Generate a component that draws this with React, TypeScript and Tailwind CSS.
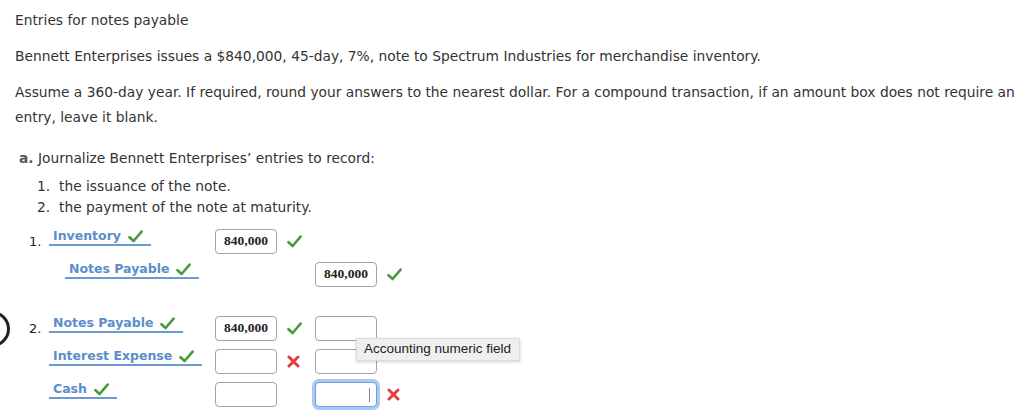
import React from "react";

const Check = () => (
	<svg width="15" height="13" viewBox="0 0 15 13" className="inline-block">
		<path
			d="M1.5 7.2 L5.6 11 L13.6 1.6"
			fill="none"
			stroke="#4a9a3c"
			strokeWidth="2.6"
			strokeLinecap="round"
			strokeLinejoin="round"
		/>
	</svg>
);

const Cross = () => (
	<svg width="13" height="13" viewBox="0 0 13 13" className="inline-block">
		<path
			d="M2 2 L11 11 M11 2 L2 11"
			fill="none"
			stroke="#e0413f"
			strokeWidth="3"
			strokeLinecap="round"
		/>
	</svg>
);

const Amount = ({ value, focused }: { value?: string; focused?: boolean }) => (
	<div
		className={
			focused
				? "relative w-[62px] h-[25px] rounded-[4px] border border-[#6f9fde] bg-white shadow-[0_0_0_3px_#a9caf2]"
				: "w-[62px] h-[25px] rounded-[4px] border border-[#a3a3a3] bg-white flex items-center justify-center text-[13.5px] font-bold text-[#222] [font-family:'Liberation_Serif',serif]"
		}
	>
		{value}
		{focused && <div className="absolute right-[6px] top-[5px] w-px h-[14px] bg-[#888]" />}
	</div>
);

type Row = {
	num?: string;
	account: string;
	credit?: boolean;
	debit?: string;
	debitMark?: "ok" | "bad";
	creditBox?: boolean;
	creditValue?: string;
	creditMark?: "ok" | "bad";
	focused?: boolean;
};

const Mark = ({ m }: { m?: "ok" | "bad" }) => (
	<div className="w-[38px] h-[25px] flex items-center pl-[10px]">
		{m === "ok" && <Check />}
		{m === "bad" && <Cross />}
	</div>
);

const JournalRow = ({ row }: { row: Row }) => (
	<div className="flex items-start h-[25px]">
		<div className="w-[20px] h-[25px] flex items-center text-[13px] text-[#222]">{row.num}</div>
		<div className="w-[166px] flex items-start">
			<div
				className={`flex items-center gap-[7px] -mt-[1px] pl-[4px] pr-[8px] h-[18px] border-b-2 border-[#6b99d3] text-[12.5px] font-bold text-[#5b8dcb] ${
					row.credit ? "ml-[16px]" : ""
				}`}
			>
				{row.account}
				<Check />
			</div>
		</div>
		{row.credit ? (
			<div className="w-[100px]" />
		) : (
			<>
				<Amount value={row.debit} />
				<Mark m={row.debitMark} />
			</>
		)}
		{(row.credit || row.creditBox) && (
			<>
				<Amount value={row.creditValue} focused={row.focused} />
				<Mark m={row.creditMark} />
			</>
		)}
	</div>
);

export default function App() {
	return (
		<div className="relative w-[1024px] h-[414px] overflow-hidden bg-white text-[#333] [font-family:'DejaVu_Sans',Verdana,sans-serif] text-[13.8px]">
			<div className="pl-[15px] pr-[4px] pt-[8px]">
				<p className="leading-[25px]">Entries for notes payable</p>
				<p className="leading-[25px] mt-[11px]">
					Bennett Enterprises issues a $840,000, 45-day, 7%, note to Spectrum Industries for merchandise inventory.
				</p>
				<p className="leading-[25px] mt-[11px]">
					Assume a 360-day year. If required, round your answers to the nearest dollar. For a compound transaction, if an amount box does not require an entry, leave it blank.
				</p>
				<p className="leading-[25px] mt-[16px] pl-[4px]">
					<span className="font-bold text-[#555]">a.</span> Journalize Bennett Enterprises’ entries to record:
				</p>
				<ol className="mt-[5px] pl-[22px] leading-[21px]">
					<li className="flex">
						<span className="w-[22px]">1.</span>the issuance of the note.
					</li>
					<li className="flex">
						<span className="w-[22px]">2.</span>the payment of the note at maturity.
					</li>
				</ol>
				<div className="mt-[11px] pl-[14px] flex flex-col gap-[8px]">
					<JournalRow row={{ num: "1.", account: "Inventory", debit: "840,000", debitMark: "ok" }} />
					<JournalRow row={{ account: "Notes Payable", credit: true, creditValue: "840,000", creditMark: "ok" }} />
					<div className="h-[13px]" />
					<JournalRow
						row={{ num: "2.", account: "Notes Payable", debit: "840,000", debitMark: "ok", creditBox: true }}
					/>
					<JournalRow row={{ account: "Interest Expense", debitMark: "bad", creditBox: true }} />
					<JournalRow row={{ account: "Cash", creditBox: true, focused: true, creditMark: "bad" }} />
				</div>
			</div>

			<div className="absolute left-[-26px] top-[311px] w-[36px] h-[36px] rounded-full border-[3px] border-[#222]" />

			<div className="absolute left-[356px] top-[338px] w-[164px] h-[23px] flex items-center pl-[7px] bg-[#efefef] border border-[#dcdcdc] shadow-[0_1px_3px_rgba(0,0,0,0.18)] text-[13.5px] text-[#222] [font-family:'Liberation_Sans',Arial,sans-serif]">
				Accounting numeric field
			</div>
		</div>
	);
}
